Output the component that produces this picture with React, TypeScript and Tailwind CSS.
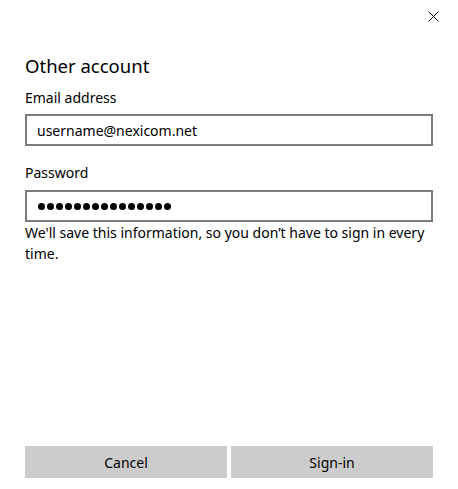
import React from "react";

export default function App() {
  const dots = Array.from({ length: 15 });
  return (
    <div
      className="relative w-[458px] h-[489px] bg-white text-black flex flex-col px-[25px] overflow-hidden"
      style={{ fontFamily: '"Noto Sans", "Open Sans", sans-serif' }}
    >
      <button className="absolute right-[19px] top-[10px] w-[12px] h-[12px] flex items-center justify-center" aria-label="Close">
        <svg width="11" height="11" viewBox="0 0 11 11">
          <path d="M0.5 0.5 L10.5 10.5 M10.5 0.5 L0.5 10.5" stroke="#000" strokeWidth="1" fill="none" />
        </svg>
      </button>

      <h1 className="mt-[53px] text-[18.5px] leading-[26px] font-normal">Other account</h1>

      <label className="mt-[9px] text-[14px] leading-[20px]">Email address</label>
      <div className="mt-[6px] h-[32px] border-2 border-[#7a7a7a] flex items-center pl-[10px] text-[14px]">
        username@nexicom.net
      </div>

      <label className="mt-[17px] text-[14px] leading-[20px]">Password</label>
      <div className="mt-[7px] h-[32px] border-2 border-[#7a7a7a] flex items-center pl-[11px] gap-[2px]">
        {dots.map((_, i) => (
          <span key={i} className="block w-[7px] h-[7px] rounded-full bg-black" />
        ))}
      </div>

      <p className="mt-0 text-[14px] leading-[21px]">
        We'll save this information, so you don’t have to sign in every time.
      </p>

      <div className="flex-1" />

      <div className="flex gap-[4px] mb-[11px]">
        <button className="flex-1 h-[32px] bg-[#cccccc] text-[14px] text-black">Cancel</button>
        <button className="flex-1 h-[32px] bg-[#cccccc] text-[14px] text-black">Sign-in</button>
      </div>
    </div>
  );
}
